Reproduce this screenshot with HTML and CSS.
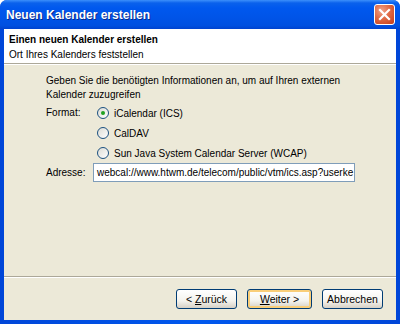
FILE: index.html
```html
<!DOCTYPE html>
<html lang="de">
<head>
  <meta charset="UTF-8" />
  <title>Neuen Kalender erstellen</title>
  <link rel="stylesheet" href="styles.css">
</head>
<body>
  <div class="window">
    <div class="titlebar">
      <span class="title">Neuen Kalender erstellen</span>
      <span class="close">
        <svg width="13" height="13" viewBox="0 0 13 13"><path d="M2 2 L11 11 M11 2 L2 11" stroke="#fff" stroke-width="2.2" stroke-linecap="square"/></svg>
      </span>
    </div>
    <div class="client">
      <div class="header">
        <div class="header-title">Einen neuen Kalender erstellen</div>
        <div class="header-sub">Ort Ihres Kalenders feststellen</div>
      </div>
      <div class="content">
        <p class="intro">Geben Sie die benötigten Informationen an, um auf Ihren externen Kalender zuzugreifen</p>
        <div class="format">
          <div class="label">Format:</div>
          <div class="radios">
            <div class="radio-row"><span class="radio checked"></span>iCalendar (ICS)</div>
            <div class="radio-row"><span class="radio"></span>CalDAV</div>
            <div class="radio-row"><span class="radio"></span>Sun Java System Calendar Server (WCAP)</div>
          </div>
        </div>
        <div class="address">
          <div class="label">Adresse:</div>
          <div class="input">webcal://www.htwm.de/telecom/public/vtm/ics.asp?userke</div>
        </div>
      </div>
      <div class="footer">
        <button class="btn"><span>&lt; <u>Z</u>urück</span></button>
        <button class="btn default"><span><u>W</u>eiter &gt;</span></button>
        <button class="btn">Abbrechen</button>
      </div>
    </div>
  </div>
</body>
</html>
```

FILE: styles.css
```css
* { margin: 0; padding: 0; box-sizing: border-box; }
body {
  width: 400px;
  height: 324px;
  overflow: hidden;
  font-family: "Liberation Sans", Arial, sans-serif;
  font-size: 10px;
  color: #000;
  background: #fff;
}
.window {
  width: 400px;
  height: 324px;
  display: flex;
  flex-direction: column;
  background: linear-gradient(to right, #0046d8, #0058ee 50%, #0046d8);
  border-radius: 7px 7px 0 0;
  overflow: hidden;
}
.titlebar {
  height: 29px;
  display: flex;
  align-items: center;
  justify-content: space-between;
  padding: 0 5px 0 6px;
  background: linear-gradient(#3c8ffb 0, #0a61ec 3px, #0058ee 8px, #0054e8 60%, #0050e0 88%, #0043cf 100%);
}
.title {
  color: #fff;
  font-weight: bold;
  font-size: 12px;
  text-shadow: 1px 1px #0a2a8a;
}
.close {
  width: 21px;
  height: 21px;
  border: 1px solid #fff;
  border-radius: 3px;
  background: radial-gradient(circle at 35% 30%, #f0a38a, #e06a45 45%, #c43b17 100%);
  display: flex;
  align-items: center;
  justify-content: center;
}
.client {
  flex: 1;
  margin: 0 4px 4px;
  background: #ece9d8;
  display: flex;
  flex-direction: column;
}
.header {
  background: #fff;
  height: 35px;
  padding: 3px 0 0 5px;
  border-bottom: 1px solid #aca899;
  box-shadow: 0 1px 0 #fff;
  line-height: 15px;
}
.header-title { font-weight: bold; }
.content {
  flex: 1;
  padding: 10px 0 0 42px;
}
.intro {
  width: 310px;
  line-height: 14px;
}
.format {
  display: flex;
  margin-top: 4px;
}
.label {
  width: 47px;
}
.format .label { padding-top: 1px; }
.radios {
  display: flex;
  flex-direction: column;
  gap: 6px;
}
.radio-row {
  display: flex;
  align-items: center;
  height: 14px;
}
.radio {
  width: 12px;
  height: 12px;
  border: 1px solid #1c5180;
  border-radius: 50%;
  background: linear-gradient(135deg, #dcdcd4, #fff);
  margin: 0 5px 0 4px;
  display: flex;
  align-items: center;
  justify-content: center;
}
.radio.checked::after {
  content: "";
  width: 4px;
  height: 4px;
  border-radius: 50%;
  background: #21a121;
}
.address {
  display: flex;
  align-items: center;
  margin-top: 3px;
}
.address .label { width: 47px; }
.input {
  width: 262px;
  height: 19px;
  border: 1px solid #7f9db9;
  background: #fff;
  padding: 3px 3px 0;
  white-space: nowrap;
  overflow: hidden;
  font-size: 10px;
}
.footer {
  height: 44px;
  border-top: 1px solid #aca899;
  box-shadow: inset 0 1px 0 #fff;
  display: flex;
  justify-content: flex-end;
  align-items: flex-start;
  padding: 12px 13px 0 0;
  gap: 10px;
}
.btn {
  font-family: "Liberation Sans", Arial, sans-serif;
  font-size: 10.5px;
  height: 20px;
  width: 61px;
  border: 1px solid #003c74;
  border-radius: 3px;
  background: linear-gradient(#ffffff, #f4f3ee 60%, #d6d0c5);
  color: #000;
}
.btn.default {
  width: 65px;
  box-shadow: inset 0 0 0 2px #f9ce79;
}
```
